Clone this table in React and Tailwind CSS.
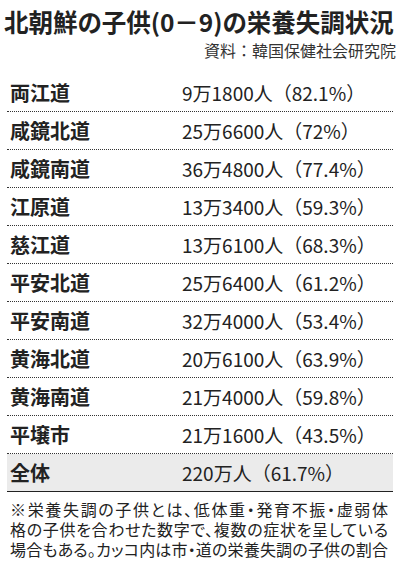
import React from 'react';

const ROWS = [
  { area: '両江道', value: '9万1800人（82.1%）' },
  { area: '咸鏡北道', value: '25万6600人（72%）' },
  { area: '咸鏡南道', value: '36万4800人（77.4%）' },
  { area: '江原道', value: '13万3400人（59.3%）' },
  { area: '慈江道', value: '13万6100人（68.3%）' },
  { area: '平安北道', value: '25万6400人（61.2%）' },
  { area: '平安南道', value: '32万4000人（53.4%）' },
  { area: '黄海北道', value: '20万6100人（63.9%）' },
  { area: '黄海南道', value: '21万4000人（59.8%）' },
  { area: '平壌市', value: '21万1600人（43.5%）' }
];

const NOTE_LINES = [
  '※栄養失調の子供とは、低体重・発育不振・虚弱体',
  '格の子供を合わせた数字で、複数の症状を呈している',
  '場合もある。カッコ内は市・道の栄養失調の子供の割合'
];

const FONT = "font-['Noto_Sans_CJK_JP','Noto_Sans',sans-serif]";

const Row = ({ area, value, total }) => (
  <div
    className={
      total
        ? 'flex items-center h-[38px] bg-[#ebebeb] border-b border-[#222]'
        : 'flex items-center h-[38px] border-b border-dotted border-[#333]'
    }
  >
    <span className="w-[175px] pl-[3px] text-[20px] font-bold leading-none text-[#222]">{area}</span>
    <span className="text-[19px] leading-none text-[#222]">{value}</span>
  </div>
);

export default function App() {
  return (
    <div className={`${FONT} w-[400px] h-[569px] bg-white text-[#222] overflow-hidden`}>
      {/* Title */}
      <div className="pt-[8px] pl-[4px] pr-[4px]">
        <h1 className="text-[24.5px] font-bold leading-[28px] tracking-[0px] whitespace-nowrap [font-feature-settings:'palt']">
          北朝鮮の子供(0－9)の栄養失調状況
        </h1>
        <p className="text-right text-[16px] leading-[20px] mt-[4px] text-[#333]">
          資料：韓国保健社会研究院
        </p>
      </div>

      {/* Table */}
      <div className="mt-[14px] mx-[7px]">
        {ROWS.map((r) => (
          <Row key={r.area} area={r.area} value={r.value} />
        ))}
        <Row area="全体" value="220万人（61.7%）" total />
      </div>

      {/* Footnote */}
      <div className="pl-[10px] pr-[12px] pt-[7px] text-[16px] leading-[20px] text-[#222] [font-feature-settings:'palt']">
        {NOTE_LINES.map((line) => (
          <div key={line} className="text-justify [text-align-last:justify] whitespace-nowrap">
            {line}
          </div>
        ))}
      </div>
    </div>
  );
}
